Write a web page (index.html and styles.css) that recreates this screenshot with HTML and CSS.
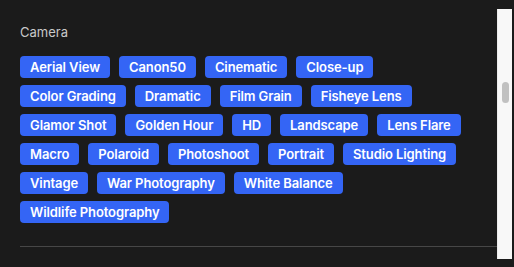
FILE: index.html
```html
<!DOCTYPE html>
<html lang="en">
<head>
    <meta charset="UTF-8">
    <meta name="viewport" content="width=device-width, initial-scale=1.0">
    <title>Camera Tags</title>
    <link rel="stylesheet" href="styles.css">
</head>
<body>
    <div class="panel">
        <div class="panel-content">
            <div class="section-label">Camera</div>
            <div class="tag-list">
                <span class="tag">Aerial View</span>
                <span class="tag">Canon50</span>
                <span class="tag">Cinematic</span>
                <span class="tag">Close-up</span>
                <span class="tag">Color Grading</span>
                <span class="tag">Dramatic</span>
                <span class="tag">Film Grain</span>
                <span class="tag">Fisheye Lens</span>
                <span class="tag">Glamor Shot</span>
                <span class="tag">Golden Hour</span>
                <span class="tag">HD</span>
                <span class="tag">Landscape</span>
                <span class="tag">Lens Flare</span>
                <span class="tag">Macro</span>
                <span class="tag">Polaroid</span>
                <span class="tag">Photoshoot</span>
                <span class="tag">Portrait</span>
                <span class="tag">Studio Lighting</span>
                <span class="tag">Vintage</span>
                <span class="tag">War Photography</span>
                <span class="tag">White Balance</span>
                <span class="tag">Wildlife Photography</span>
            </div>
            <div class="divider"></div>
        </div>
        <div class="scrollbar">
            <div class="scroll-thumb"></div>
        </div>
    </div>
</body>
</html>
```

FILE: styles.css
```css
:root {
    --bg-color: #1b1b1b;
    --tag-color: #3465f5;
    --label-color: #c9c9c9;
    --divider-color: #474747;
}

* {
    margin: 0;
    padding: 0;
    box-sizing: border-box;
    font-family: Inter, 'Noto Sans', sans-serif;
}

body {
    background-color: var(--bg-color);
    height: 267px;
    overflow: hidden;
}

.panel {
    display: flex;
    padding-top: 9px;
    padding-right: 2px;
}

.panel-content {
    flex: 1;
    padding: 15px 0 0 20px;
}

.section-label {
    color: var(--label-color);
    font-size: 13px;
    line-height: 16px;
    margin-bottom: 16px;
}

.tag-list {
    display: flex;
    flex-wrap: wrap;
    gap: 7px 9px;
    padding-right: 20px;
}

.tag {
    background-color: var(--tag-color);
    color: #fff;
    font-size: 13px;
    font-weight: 600;
    letter-spacing: -0.1px;
    line-height: 16px;
    padding: 3px 10px;
    border-radius: 4px;
}

.divider {
    height: 1px;
    background-color: var(--divider-color);
    margin-top: 23px;
}

.scrollbar {
    width: 15px;
    height: 250px;
    background-color: #f8f8f8;
    border-left: 1px solid #ececec;
    padding-top: 73px;
    display: flex;
    justify-content: center;
}

.scroll-thumb {
    width: 7px;
    height: 21px;
    border-radius: 4px;
    background-color: #c1c1c1;
}
```
